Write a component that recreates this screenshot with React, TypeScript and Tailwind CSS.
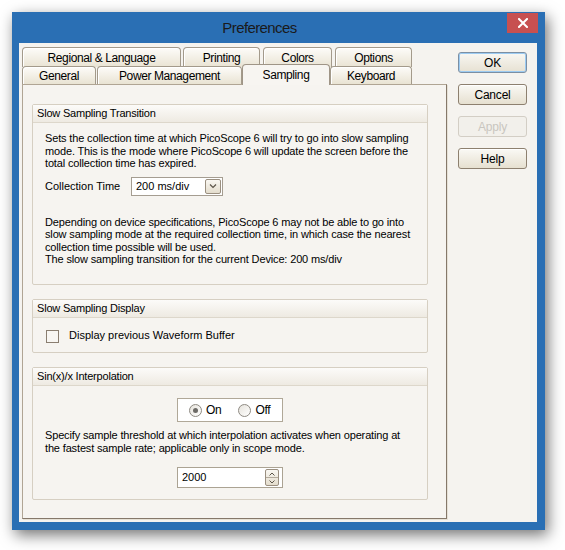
import React from "react";

const FONT = { fontFamily: '"Liberation Sans", Arial, sans-serif' };

function Tab({ label, w, selected = false, back = false }: { label: string; w: number; selected?: boolean; back?: boolean }) {
  if (selected) {
    return (
      <div
        className="relative z-10 top-[1px] h-[21px] flex items-center justify-center border border-[#9f9587] border-b-0 rounded-t-[4px] bg-[#f7f5f1] text-[12px] tracking-[-0.4px] text-black shrink-0"
        style={{ width: w }}
      >
        {label}
      </div>
    );
  }
  return (
    <div
      className={
        "flex justify-center border border-[#a39a8b] rounded-t-[4px] bg-gradient-to-b from-[#fdfcf9] to-[#e9e3d3] text-[12px] tracking-[-0.4px] text-black shrink-0 shadow-[inset_1px_1px_0_#ffffff] " +
        (back ? "h-[20px] pt-[1px] border-b-0" : "h-[18px] items-center border-b-0")
      }
      style={{ width: w }}
    >
      {label}
    </div>
  );
}

function Group({ title, children, className = "" }: { title: string; children: React.ReactNode; className?: string }) {
  return (
    <div className={"w-[396px] border border-[#d6cfc2] rounded-[2px] bg-[#f6f4f0] " + className}>
      <div className="h-[18px] flex items-center pl-[4px] bg-gradient-to-b from-[#fcfbf9] to-[#eeeae2] border-b border-[#ddd7cb] text-[11px] tracking-[-0.2px] text-black">
        {title}
      </div>
      {children}
    </div>
  );
}

function Button({ label, variant = "normal" }: { label: string; variant?: "normal" | "default" | "disabled" }) {
  const base = "w-[69px] h-[21px] rounded-[3px] flex items-center justify-center text-[12px] tracking-[-0.2px] border ";
  if (variant === "disabled") {
    return <div className={base + "border-[#d3cec5] bg-[#f2f0eb] text-[#c9c6bf]"}>{label}</div>;
  }
  if (variant === "default") {
    return (
      <div className={base + "border-[#7c8fa3] bg-gradient-to-b from-[#f8f7f3] to-[#e7e1d2] text-black shadow-[inset_0_0_0_1px_#9ccbf2]"}>
        {label}
      </div>
    );
  }
  return (
    <div className={base + "border-[#8d806f] bg-gradient-to-b from-[#faf9f5] to-[#e6e0d0] text-black shadow-[inset_0_1px_0_#ffffff]"}>
      {label}
    </div>
  );
}

function Radio({ checked, label }: { checked?: boolean; label: string }) {
  return (
    <div className="flex items-center">
      <div className="w-[13px] h-[13px] rounded-full border border-[#8e8a82] bg-gradient-to-br from-[#e6e3dc] to-[#ffffff] flex items-center justify-center">
        {checked && <div className="w-[5px] h-[5px] rounded-full bg-[#6c6a66]" />}
      </div>
      <span className="ml-[4px] text-[12px] tracking-[-0.3px] text-black">{label}</span>
    </div>
  );
}

export default function App() {
  return (
    <div className="w-[565px] h-[550px] bg-white pl-[12px] pt-[12px] overflow-hidden" style={FONT}>
      <div className="w-[533px] h-[518px] bg-[#2a6fb4] flex flex-col shadow-[3px_5px_14px_rgba(0,0,0,0.55)]">
        {/* Title bar */}
        <div className="h-[31px] flex items-start">
          <div className="flex-1 h-[31px] flex items-center justify-center text-[15px] text-[#1a1a1a] tracking-[-0.6px] pt-[1px]">
            Preferences
          </div>
          <div className="w-[31px] h-[20px] mt-[1px] mr-[7px] bg-[#c75050] flex items-center justify-center">
            <svg width="10" height="10" viewBox="0 0 10 10">
              <path d="M1 1 L9 9 M9 1 L1 9" stroke="#ffffff" strokeWidth="2" strokeLinecap="square" />
            </svg>
          </div>
        </div>

        {/* Client area */}
        <div className="flex-1 ml-[7px] mr-[8px] mb-[8px] bg-[#f5f3ef] flex">
          {/* Tab control */}
          <div className="w-[428px] pl-[3px] pt-[4px] flex flex-col">
            <div className="h-[19px] flex">
              <Tab label="Regional & Language" w={159} back />
              <div className="w-[2px]" />
              <Tab label="Printing" w={77} back />
              <div className="w-[3px]" />
              <Tab label="Colors" w={69} back />
              <div className="w-[3px]" />
              <Tab label="Options" w={77} back />
            </div>
            <div className="h-[18px] flex items-end relative z-[5]">
              <Tab label="General" w={74} />
              <div className="w-[1px]" />
              <Tab label="Power Management" w={145} />
              <Tab label="Sampling" w={88} selected />
              <Tab label="Keyboard" w={82} />
            </div>
            {/* Panel */}
            <div className="w-[425px] h-[435px] border border-[#b0a594] border-r-[#85786a] border-b-[#85786a] bg-[#f6f4f0] pl-[9px] pt-[19px] flex flex-col shadow-[1px_1px_0_#e6e1d6]">
              <Group title="Slow Sampling Transition" className="h-[181px]">
                <div className="pl-[12px] pt-[9px] text-[11px] leading-[12.5px] text-black whitespace-nowrap tracking-[-0.15px]">
                  <p>
                    Sets the collection time at which PicoScope 6 will try to go into slow sampling
                    <br />
                    mode. This is the mode where PicoScope 6 will update the screen before the
                    <br />
                    total collection time has expired.
                  </p>
                  <div className="flex items-center mt-[7px] tracking-normal">
                    <span className="w-[86px]">Collection Time</span>
                    <div className="w-[92px] h-[19px] border border-[#a59d91] bg-white flex items-center justify-between pl-[4px] pr-[1px]">
                      <span>200 ms/div</span>
                      <div className="w-[16px] h-[15px] rounded-[2px] border border-[#9a8f80] bg-gradient-to-b from-[#f9f7f2] to-[#e4ddcd] flex items-center justify-center">
                        <svg width="8" height="6" viewBox="0 0 8 6">
                          <path d="M1 1.5 L4 4.5 L7 1.5" stroke="#5b5449" strokeWidth="1.2" fill="none" />
                        </svg>
                      </div>
                    </div>
                  </div>
                  <p className="mt-[20px]">
                    Depending on device specifications, PicoScope 6 may not be able to go into
                    <br />
                    slow sampling mode at the required collection time, in which case the nearest
                    <br />
                    collection time possible will be used.
                    <br />
                    The slow sampling transition for the current Device: 200 ms/div
                  </p>
                </div>
              </Group>

              <Group title="Slow Sampling Display" className="h-[54px] mt-[14px]">
                <div className="flex items-start pl-[13px] pt-[11px] text-[11px] text-black">
                  <div className="w-[13px] h-[13px] border border-[#8a7e70] bg-[#f8f6f2] mt-[1px]" />
                  <span className="ml-[10px] leading-[12px]">Display previous Waveform Buffer</span>
                </div>
              </Group>

              <Group title="Sin(x)/x Interpolation" className="h-[133px] mt-[14px]">
                <div className="flex flex-col items-center pt-[12px] text-[11px] text-black">
                  <div className="w-[106px] h-[24px] border border-[#b0a898] bg-white flex items-center pl-[11px] gap-[17px]">
                    <Radio checked label="On" />
                    <Radio label="Off" />
                  </div>
                </div>
                <p className="pl-[12px] mt-[7px] text-[11px] leading-[12.5px] text-black whitespace-nowrap tracking-[-0.15px]">
                  Specify sample threshold at which interpolation activates when operating at
                  <br />
                  the fastest sample rate; applicable only in scope mode.
                </p>
                <div className="flex justify-center mt-[13px]">
                  <div className="w-[106px] h-[21px] border border-[#aba393] bg-white flex items-center justify-between pl-[4px] pr-[3px] text-[11px] text-black">
                    <span>2000</span>
                    <div className="w-[14px] h-[17px] rounded-[2px] border border-[#9a8f80] bg-gradient-to-b from-[#f9f7f2] to-[#e4ddcd] flex flex-col">
                      <div className="flex-1 flex items-center justify-center border-b border-[#b3aa9c]">
                        <svg width="6" height="4" viewBox="0 0 6 4">
                          <path d="M0.5 3.5 L3 1 L5.5 3.5" stroke="#5b5449" strokeWidth="1" fill="none" />
                        </svg>
                      </div>
                      <div className="flex-1 flex items-center justify-center">
                        <svg width="6" height="4" viewBox="0 0 6 4">
                          <path d="M0.5 0.5 L3 3 L5.5 0.5" stroke="#5b5449" strokeWidth="1" fill="none" />
                        </svg>
                      </div>
                    </div>
                  </div>
                </div>
              </Group>
            </div>
          </div>

          {/* Buttons */}
          <div className="ml-[11px] pt-[9px] flex flex-col gap-[11px]">
            <Button label="OK" variant="default" />
            <Button label="Cancel" />
            <Button label="Apply" variant="disabled" />
            <Button label="Help" />
          </div>
        </div>
      </div>
    </div>
  );
}
